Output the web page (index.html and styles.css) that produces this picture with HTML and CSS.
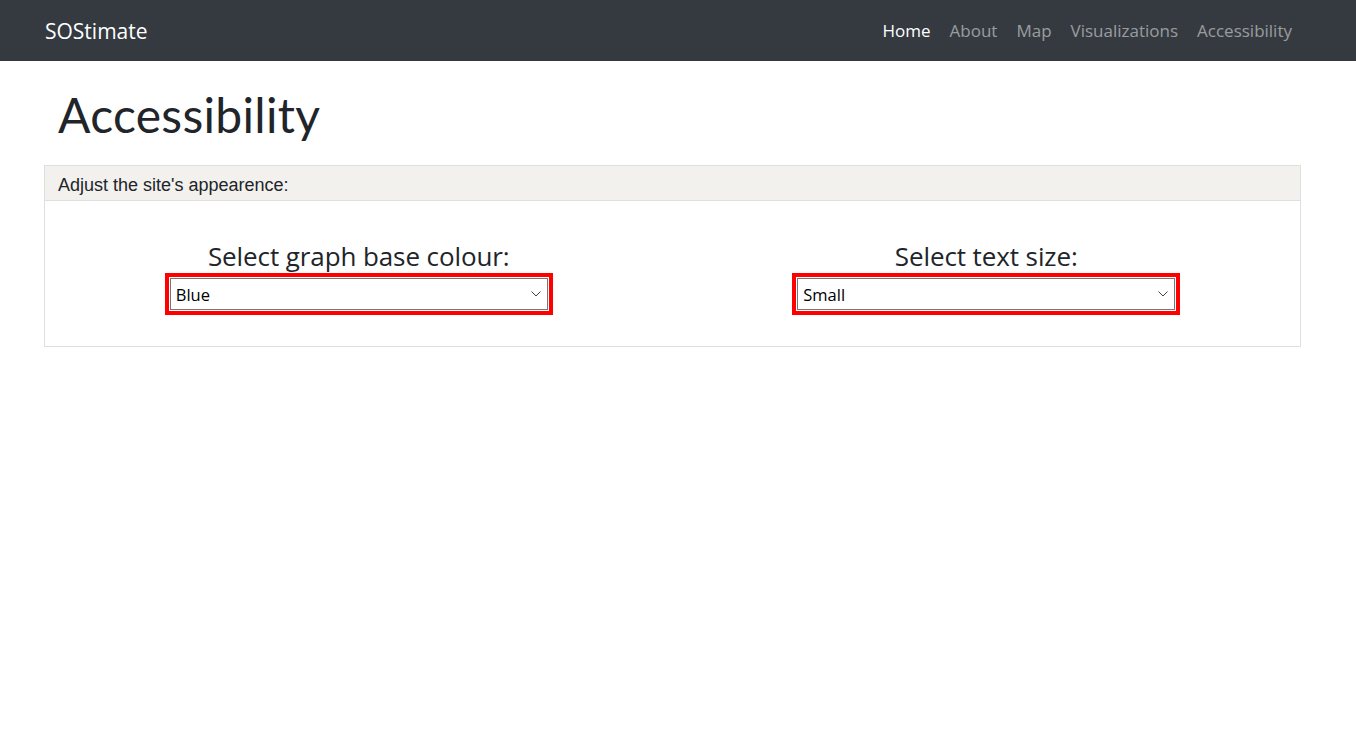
FILE: index.html
```html
<!DOCTYPE html>
<html lang="en">
<head>
<meta charset="utf-8">
<title>Accessibility - SOStimate</title>
<link rel="stylesheet" href="styles.css">
</head>
<body>
<nav class="navbar">
  <a class="brand" href="#">SOStimate</a>
  <ul class="nav">
    <li><a class="nav-link active" href="#">Home</a></li>
    <li><a class="nav-link" href="#">About</a></li>
    <li><a class="nav-link" href="#">Map</a></li>
    <li><a class="nav-link" href="#">Visualizations</a></li>
    <li><a class="nav-link" href="#">Accessibility</a></li>
  </ul>
</nav>
<main class="page">
  <h1 class="title">Accessibility</h1>
  <section class="card">
    <div class="card-header">Adjust the site's appearence:</div>
    <div class="card-body">
      <div class="col">
        <label class="field-label" for="colour">Select graph base colour:</label>
        <div class="select-wrap">
          <select class="field-select" id="colour">
            <option>Blue</option>
            <option>Green</option>
            <option>Red</option>
          </select>
          <svg class="chevron" width="10" height="6" viewBox="0 0 10 6" aria-hidden="true"><path d="M0.5 0.5 L5 5 L9.5 0.5" fill="none" stroke="#444" stroke-width="1"/></svg>
        </div>
      </div>
      <div class="col">
        <label class="field-label" for="size">Select text size:</label>
        <div class="select-wrap">
          <select class="field-select" id="size">
            <option>Small</option>
            <option>Medium</option>
            <option>Large</option>
          </select>
          <svg class="chevron" width="10" height="6" viewBox="0 0 10 6" aria-hidden="true"><path d="M0.5 0.5 L5 5 L9.5 0.5" fill="none" stroke="#444" stroke-width="1"/></svg>
        </div>
      </div>
    </div>
  </section>
</main>
</body>
</html>
```
FILE: styles.css
```css
* { box-sizing: border-box; }
html, body { margin: 0; padding: 0; background: #fff; }
body {
  font-family: "Open Sans", "Noto Sans", sans-serif;
  color: #212529;
}
.navbar {
  height: 61px;
  background: #343a40;
  display: flex;
  align-items: center;
  justify-content: space-between;
  padding: 0 56px 0 45px;
}
.brand {
  color: #fff;
  text-decoration: none;
  font-size: 21px;
}
.nav {
  list-style: none;
  margin: 0;
  padding: 0;
  display: flex;
  gap: 3px;
}
.nav-link {
  display: block;
  padding: 8px 8px;
  color: rgba(255,255,255,0.5);
  text-decoration: none;
  font-size: 17px;
}
.nav-link.active { color: #fff; }
.page {
  padding: 0 55px 0 44px;
}
.title {
  margin: 24px 0 20px 14px;
  font-family: "Lato", sans-serif;
  font-weight: 400;
  font-size: 48px;
  line-height: 60px;
  color: #212529;
  letter-spacing: 0.3px;
}
.card {
  border: 1px solid #dfdfdf;
}
.card-header {
  height: 35px;
  padding: 5px 13px 0;
  display: flex;
  align-items: center;
  background: #f2f1ed;
  border-bottom: 1px solid #dfdfdf;
  font-family: "Liberation Sans", Arial, sans-serif;
  font-size: 18px;
  color: #212529;
}
.card-body {
  display: grid;
  grid-template-columns: 1fr 1fr;
  padding: 38px 0 36px;
}
.col {
  display: flex;
  flex-direction: column;
  align-items: center;
}
.field-label {
  font-size: 26px;
  line-height: 34px;
  margin-bottom: 5px;
  color: #212529;
  letter-spacing: -0.1px;
}
.select-wrap {
  position: relative;
  width: 378px;
  height: 32px;
}
.field-select {
  display: block;
  width: 378px;
  height: 32px;
  border: 1px solid #767676;
  border-radius: 0;
  outline: 4px solid #ff0000;
  outline-offset: 1px;
  background: #fff;
  font-family: "Open Sans", "Noto Sans", sans-serif;
  font-size: 16.5px;
  color: #000;
  padding: 0 20px 0 5px;
  -webkit-appearance: none;
  appearance: none;
}
.chevron {
  position: absolute;
  right: 7px;
  top: 13px;
  pointer-events: none;
}
```
